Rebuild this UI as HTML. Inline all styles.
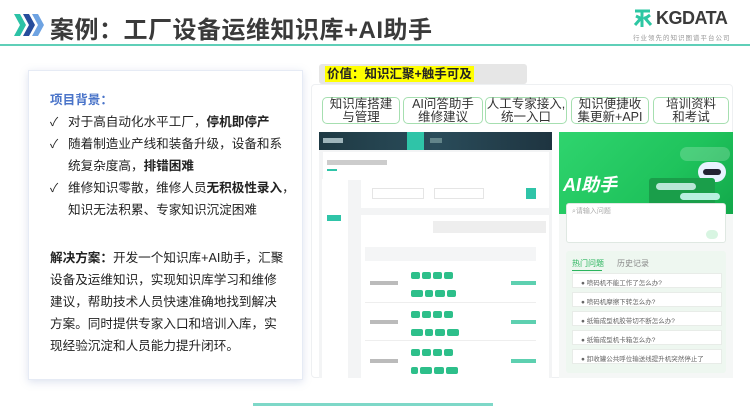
<!DOCTYPE html><html><head><meta charset="utf-8"><style>
*{margin:0;padding:0;box-sizing:border-box}
body{width:750px;height:406px;background:#fff;font-family:"Liberation Sans","Noto Sans CJK SC",sans-serif;position:relative;overflow:hidden;color:#222}
.a{position:absolute}
.title{left:50px;top:10px;font-size:24px;font-weight:bold;color:#3a3a3a;letter-spacing:0.5px;white-space:nowrap}
.line{left:0;top:44px;width:750px;height:2px;background:#5fcfb8}
.panel{left:28px;top:70px;width:275px;height:310px;background:#fff;border:1px solid #e6ebf5;box-shadow:0 2px 8px rgba(120,140,190,.25)}
.lt{font-size:12.6px;line-height:22px;color:#222;white-space:nowrap}
.ck{font-size:12px;line-height:22px;color:#222}
.btn{top:97px;height:27px;border:1.5px solid #a6dfb0;border-radius:5px;font-size:12.5px;line-height:12.5px;text-align:center;padding-top:0;color:#333;background:#fff;white-space:nowrap}
.tag{display:inline-block;background:#2dbf8a;height:7px;border-radius:2px;margin:1px}
</style></head><body>
<svg class="a" style="left:13px;top:13px" width="32" height="24" viewBox="0 0 32 24">
<path d="M1 1h6l6 11-6 11H1l6-11z" fill="#2cc2a6"/><path d="M10 1h6l6 11-6 11h-6l6-11z" fill="#274d9c"/><path d="M19 1h6l6 11-6 11h-6l6-11z" fill="#6ea3e2"/></svg>
<div class="a title">案例：工厂设备运维知识库+AI助手</div>
<div class="a line"></div>
<svg class="a" style="left:633px;top:8px" width="20" height="20" viewBox="0 0 20 20"><path d="M2 3h15M9 3v16M9 9L2 17M11 9l7 8M3 8l4 2M17 7l-4 3" stroke="#2dc7a3" stroke-width="3" fill="none"/></svg>
<div class="a" style="left:656px;top:8px;font-size:18px;font-weight:bold;color:#3b3b3b;letter-spacing:-0.5px">KGDATA</div>
<div class="a" style="left:633px;top:32px;font-size:6.5px;color:#999;letter-spacing:1px;white-space:nowrap">行业领先的知识图谱平台公司</div>

<div class="a panel"></div>
<div class="a lt" style="left:50px;top:89px;color:#4a74c9;font-weight:bold">项目背景：</div>
<div class="a ck" style="left:50px;top:111px">✓</div><div class="a lt" style="left:68px;top:111px">对于高自动化水平工厂，<b>停机即停产</b></div>
<div class="a ck" style="left:50px;top:133px">✓</div><div class="a lt" style="left:68px;top:133px">随着制造业产线和装备升级，设备和系</div>
<div class="a lt" style="left:68px;top:155px">统复杂度高，<b>排错困难</b></div>
<div class="a ck" style="left:50px;top:177px">✓</div><div class="a lt" style="left:68px;top:177px">维修知识零散，维修人员<b>无积极性录入</b>，</div>
<div class="a lt" style="left:68px;top:199px">知识无法积累、专家知识沉淀困难</div>
<div class="a lt" style="left:50px;top:247px"><b>解决方案：</b>开发一个知识库+AI助手，汇聚</div>
<div class="a lt" style="left:50px;top:269px">设备及运维知识，实现知识库学习和维修</div>
<div class="a lt" style="left:50px;top:291px">建议，帮助技术人员快速准确地找到解决</div>
<div class="a lt" style="left:50px;top:313px">方案。同时提供专家入口和培训入库，实</div>
<div class="a lt" style="left:50px;top:335px">现经验沉淀和人员能力提升闭环。</div>

<div class="a" style="left:319px;top:64px;width:208px;height:20px;background:#e6e6e6;border-radius:3px"></div>
<div class="a" style="left:325px;top:66px;height:16px;background:#ffff00;font-size:12.5px;font-weight:bold;line-height:16px;padding:0 2px;white-space:nowrap">价值：知识汇聚+触手可及</div>
<div class="a" style="left:311px;top:84px;width:422px;height:294px;border:1px solid #eef0f2;border-radius:4px;background:#fff"></div>
<div class="a btn" style="left:322px;width:78px">知识库搭建<br>与管理</div>
<div class="a btn" style="left:403px;width:80px">AI问答助手<br>维修建议</div>
<div class="a btn" style="left:485px;width:82px">人工专家接入,<br>统一入口</div>
<div class="a btn" style="left:571px;width:78px">知识便捷收<br>集更新+API</div>
<div class="a btn" style="left:653px;width:76px">培训资料<br>和考试</div>

<div class="a" style="left:319px;top:132px;width:233px;height:246px;background:#f3f4f5"></div>
<div class="a" style="left:319px;top:132px;width:233px;height:18px;background:linear-gradient(90deg,#1f3a44,#2a4c5a,#1e3440)"></div>
<div class="a" style="left:407px;top:132px;width:17px;height:18px;background:#2fc4a8"></div>
<div class="a" style="left:323px;top:138px;width:20px;height:5px;background:#9fb5bb"></div>
<div class="a" style="left:430px;top:138px;width:80px;height:5px;border-left:12px solid #8aa;opacity:.6"></div>
<div class="a" style="left:323px;top:152px;width:226px;height:28px;background:#fff"></div>
<div class="a" style="left:327px;top:160px;width:60px;height:5px;background:#ccc"></div>
<div class="a" style="left:327px;top:169px;width:10px;height:1.5px;background:#2fc4a8"></div>
<div class="a" style="left:322px;top:179px;width:26px;height:199px;background:#fff"></div>
<div class="a" style="left:327px;top:215px;width:14px;height:6px;background:#2fc4a8"></div>
<div class="a" style="left:361px;top:180px;width:188px;height:28px;background:#fff"></div>
<div class="a" style="left:372px;top:188px;width:52px;height:11px;border:1px solid #e5e5e5"></div>
<div class="a" style="left:434px;top:188px;width:50px;height:11px;border:1px solid #e5e5e5"></div>
<div class="a" style="left:526px;top:188px;width:10px;height:11px;background:#2fc4a8"></div>
<div class="a" style="left:361px;top:215px;width:188px;height:163px;background:#fff"></div>
<div class="a" style="left:433px;top:221px;width:113px;height:12px;background:#eee"></div>
<div class="a" style="left:365px;top:247px;width:171px;height:14px;background:#f4f5f6"></div>
<div class="a" style="left:410px;top:267px;width:50px"><span class="tag" style="width:9px"></span><span class="tag" style="width:9px"></span><span class="tag" style="width:9px"></span><span class="tag" style="width:9px"></span><span class="tag" style="width:12px"></span><span class="tag" style="width:8px"></span><span class="tag" style="width:10px"></span><span class="tag" style="width:9px"></span></div>
<div class="a" style="left:410px;top:306px;width:50px"><span class="tag" style="width:9px"></span><span class="tag" style="width:9px"></span><span class="tag" style="width:9px"></span><span class="tag" style="width:9px"></span><span class="tag" style="width:12px"></span><span class="tag" style="width:8px"></span><span class="tag" style="width:10px"></span><span class="tag" style="width:12px"></span></div>
<div class="a" style="left:410px;top:344px;width:50px"><span class="tag" style="width:9px"></span><span class="tag" style="width:9px"></span><span class="tag" style="width:9px"></span><span class="tag" style="width:9px"></span><span class="tag" style="width:7px"></span><span class="tag" style="width:12px"></span><span class="tag" style="width:10px"></span><span class="tag" style="width:12px"></span></div>
<div class="a" style="left:370px;top:281px;width:28px;height:4px;background:#bbb"></div>
<div class="a" style="left:370px;top:320px;width:28px;height:4px;background:#bbb"></div>
<div class="a" style="left:370px;top:359px;width:28px;height:4px;background:#bbb"></div>
<div class="a" style="left:511px;top:281px;width:25px;height:4px;background:#5dd0b0"></div>
<div class="a" style="left:511px;top:320px;width:25px;height:4px;background:#5dd0b0"></div>
<div class="a" style="left:511px;top:359px;width:25px;height:4px;background:#5dd0b0"></div>
<div class="a" style="left:365px;top:302px;width:171px;height:1px;background:#eee"></div>
<div class="a" style="left:365px;top:340px;width:171px;height:1px;background:#eee"></div>

<div class="a" style="left:559px;top:132px;width:174px;height:246px;background:#f5f7f6"></div>
<div class="a" style="left:559px;top:132px;width:174px;height:82px;background:linear-gradient(135deg,#2fd46e,#1fc35c 60%,#12a84a)"></div>
<div class="a" style="left:680px;top:147px;width:50px;height:14px;border-radius:7px;background:rgba(255,255,255,.2)"></div>
<div class="a" style="left:698px;top:162px;width:28px;height:20px;border-radius:12px;background:#e8f2ff"></div>
<div class="a" style="left:703px;top:169px;width:18px;height:6px;border-radius:3px;background:#223"></div>
<div class="a" style="left:649px;top:178px;width:66px;height:36px;background:#1a9e4a;border-radius:3px"></div>
<div class="a" style="left:656px;top:183px;width:40px;height:7px;border-radius:4px;background:#b8e6d6"></div>
<div class="a" style="left:680px;top:193px;width:40px;height:7px;border-radius:4px;background:#b8f0e0"></div>
<div class="a" style="left:563px;top:171px;font-size:18px;font-style:italic;font-weight:bold;color:#fff;white-space:nowrap">AI助手</div>
<div class="a" style="left:566px;top:203px;width:160px;height:40px;background:#fff;border:1px solid #dfe8e2;border-radius:3px"></div>
<div class="a" style="left:572px;top:206px;font-size:7px;color:#aaa">⌕请输入问题</div>
<div class="a" style="left:706px;top:230px;width:12px;height:9px;border-radius:5px;background:#d8f5e2"></div>
<div class="a" style="left:566px;top:251px;width:160px;height:122px;background:#eef7f0;border-radius:3px"></div>
<div class="a" style="left:572px;top:258px;font-size:8px;color:#2bb55e">热门问题</div>
<div class="a" style="left:572px;top:270px;width:30px;height:1px;background:#2bb55e"></div>
<div class="a" style="left:617px;top:258px;font-size:8px;color:#888">历史记录</div>
<div class="a" style="left:572px;top:273px;width:150px;height:15px;background:#fff;border:1px solid #e8ece8;font-size:6.5px;color:#666;padding:3px 0 0 8px">● 喷码机不能工作了怎么办?</div>
<div class="a" style="left:572px;top:292px;width:150px;height:15px;background:#fff;border:1px solid #e8ece8;font-size:6.5px;color:#666;padding:3px 0 0 8px">● 喷码机摩擦下转怎么办?</div>
<div class="a" style="left:572px;top:311px;width:150px;height:15px;background:#fff;border:1px solid #e8ece8;font-size:6.5px;color:#666;padding:3px 0 0 8px">● 纸箱成型机胶带切不断怎么办?</div>
<div class="a" style="left:572px;top:330px;width:150px;height:15px;background:#fff;border:1px solid #e8ece8;font-size:6.5px;color:#666;padding:3px 0 0 8px">● 纸箱成型机卡箱怎么办?</div>
<div class="a" style="left:572px;top:349px;width:150px;height:15px;background:#fff;border:1px solid #e8ece8;font-size:6.5px;color:#666;padding:3px 0 0 8px">● 卸收罐公共呼位输送线提升机突然停止了</div>

<div class="a" style="left:253px;top:403px;width:240px;height:3px;background:#7ed8c8"></div>
</body></html>
